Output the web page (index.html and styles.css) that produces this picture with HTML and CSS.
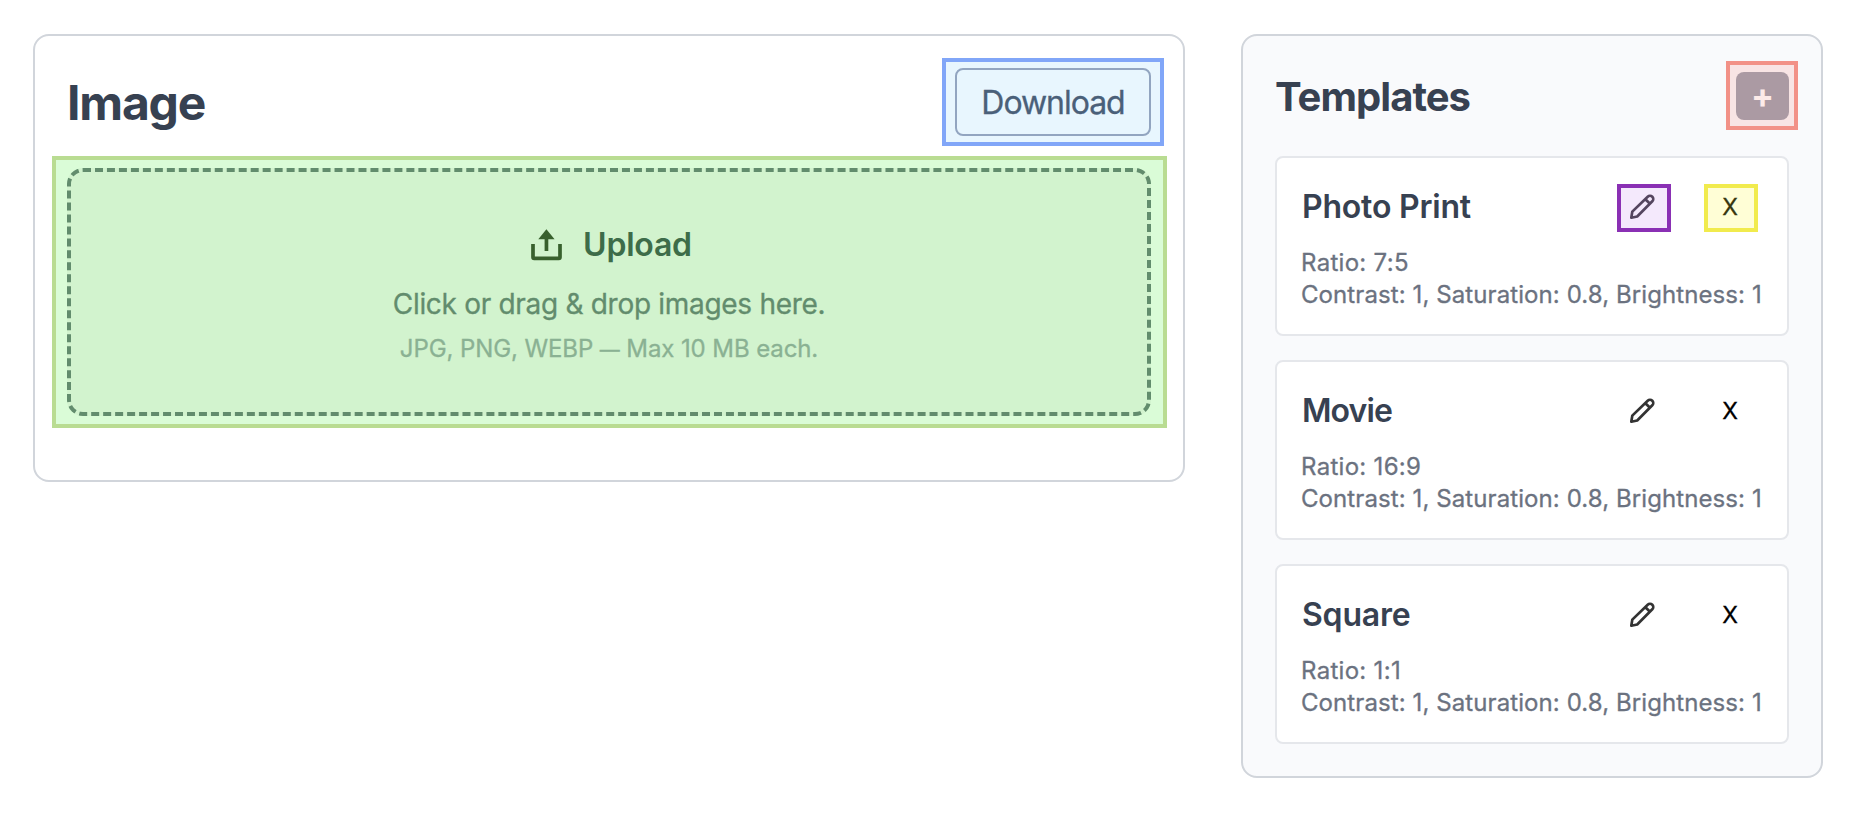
FILE: index.html
```html
<!DOCTYPE html>
<html lang="en">
<head>
<meta charset="utf-8">
<title>Image templates</title>
<link rel="stylesheet" href="styles.css">
</head>
<body>
<svg class="defs" aria-hidden="true">
  <symbol id="pencil" viewBox="0 0 25 25">
    <path d="M1.3 23.7 2.3 17.6 17.7 2.7a3.25 3.25 0 0 1 4.6 4.6L7.2 22.5ZM15.4 5.2 20 9.8"/>
  </symbol>
</svg>
<main class="page">
  <section class="panel image-panel">
    <header class="image-head">
      <h1 class="image-title">Image</h1>
      <button class="download mark mark-blue"><span>Download</span></button>
    </header>
    <div class="drop mark mark-green">
      <div class="drop-title">
        <svg class="upload-icon" viewBox="0 0 40 40">
          <path class="tray" d="M7 20v13.2q0 1.2 1.2 1.2h24.6q1.2 0 1.2-1.2V20"/>
          <path class="arrow" d="M20.4 5.2 28.6 15.2H22.3V27H18.6V15.2H12.3Z"/>
        </svg>
        <span>Upload</span>
      </div>
      <p class="drop-text">Click or drag &amp; drop images here.</p>
      <p class="drop-hint">JPG, PNG, WEBP <span class="dash">—</span> Max 10 MB each.</p>
    </div>
  </section>

  <aside class="panel templates-panel">
    <header class="templates-head">
      <h2 class="templates-title">Templates</h2>
      <button class="add mark mark-red"><span>+</span></button>
    </header>
    <article class="card">
      <div class="card-head">
        <h3 class="card-title">Photo Print</h3>
        <div class="actions">
          <button class="action edit mark mark-purple"><svg class="pencil"><use href="#pencil"/></svg></button>
          <button class="action remove mark mark-yellow"><span>X</span></button>
        </div>
      </div>
      <p class="card-line ratio">Ratio: 7:5</p>
      <p class="card-line">Contrast: 1, Saturation: 0.8, Brightness: 1</p>
    </article>
    <article class="card">
      <div class="card-head">
        <h3 class="card-title tight">Movie</h3>
        <div class="actions">
          <button class="action edit"><svg class="pencil"><use href="#pencil"/></svg></button>
          <button class="action remove"><span>X</span></button>
        </div>
      </div>
      <p class="card-line ratio">Ratio: 16:9</p>
      <p class="card-line">Contrast: 1, Saturation: 0.8, Brightness: 1</p>
    </article>
    <article class="card">
      <div class="card-head">
        <h3 class="card-title">Square</h3>
        <div class="actions">
          <button class="action edit"><svg class="pencil"><use href="#pencil"/></svg></button>
          <button class="action remove"><span>X</span></button>
        </div>
      </div>
      <p class="card-line ratio">Ratio: 1:1</p>
      <p class="card-line">Contrast: 1, Saturation: 0.8, Brightness: 1</p>
    </article>
  </aside>
</main>
</body>
</html>
```
FILE: styles.css
```css
* { box-sizing: border-box; }
body {
  margin: 0;
  background: #fff;
  color: #374151;
  font-family: Inter, "Liberation Sans", sans-serif;
}
h1, h2, h3, p { margin: 0; }
button {
  border: 0;
  padding: 0;
  background: none;
  font-family: inherit;
  color: inherit;
}
.defs { position: absolute; width: 0; height: 0; }

.page {
  display: flex;
  align-items: flex-start;
  gap: 56px;
  padding: 34px 27px 0 33px;
}
.panel {
  isolation: isolate;
  border: 2px solid #d1d5db;
  border-radius: 16px;
  padding: 32px;
}
.image-panel { width: 1152px; height: 448px; }
.templates-panel {
  width: 582px;
  height: 744px;
  padding: 36px 32px 32px;
  background: #f9fafc;
  display: flex;
  flex-direction: column;
  gap: 24px;
}

/* Highlight frames drawn around the interactive areas */
.mark { position: relative; }
.mark::before {
  content: "";
  position: absolute;
  z-index: -1;
  border: 4px solid;
}
.mark-blue::before { inset: -12px -15px; border-color: #81a6f8; background: #e8f6fe; }
.mark-green::before { inset: -16px -20px -16px -19px; border-color: #b9dc92; background: #dafcd7; }
.mark-red::before { inset: -11px -9px -10px -10px; border-color: #f29187; background: #f8e4e4; }
.mark-purple::before { inset: 2px 0 -2px; border-color: #8a30b4; background: #f4e9fc; }
.mark-yellow::before { inset: 2px 0 -2px; border-color: #f1eb4d; background: #fffed6; }

.image-head {
  display: flex;
  justify-content: space-between;
  align-items: center;
  height: 68px;
  margin-bottom: 32px;
}
.image-title { font-size: 48px; font-weight: 700; letter-spacing: -1.19px; }
.download {
  width: 196px;
  height: 68px;
  border: 2px solid #92a5c0;
  border-radius: 8px;
  font-size: 32px;
  letter-spacing: -1.04px;
  color: #4a6079;
  -webkit-text-stroke: 0.3px;
}

.drop {
  height: 248px;
  padding: 48px 0;
  border: 4px dashed #628c6d;
  border-radius: 16px;
  background: #d2f3ce;
  text-align: center;
}
.drop-title {
  display: flex;
  justify-content: center;
  align-items: center;
  gap: 17px;
  height: 48px;
  margin-bottom: 16px;
  font-size: 32px;
  font-weight: 600;
  letter-spacing: -0.21px;
  color: #3d6c49;
}
.upload-icon { width: 40px; height: 40px; }
.tray { fill: none; stroke: #38602d; stroke-width: 3.7; }
.arrow { fill: #38602d; }
.drop-text {
  margin-bottom: 9px;
  font-size: 28px;
  line-height: 40px;
  letter-spacing: -0.3px;
  color: #628c6d;
  -webkit-text-stroke: 0.3px;
}
.drop-hint {
  font-size: 24px;
  line-height: 32px;
  letter-spacing: -0.1px;
  color: #8ab193;
  -webkit-text-stroke: 0.3px;
}
.dash { font-size: 20px; line-height: 1; }

.templates-head {
  display: flex;
  justify-content: space-between;
  align-items: center;
  height: 48px;
  margin-bottom: 12px;
}
.templates-title { font-size: 40px; font-weight: 700; letter-spacing: -0.96px; }
.add {
  width: 53px;
  height: 48px;
  border-radius: 8px;
  background: #ab9aa3;
  color: #fdebe9;
  font-size: 34px;
  font-weight: 700;
  line-height: 48px;
}

.card {
  isolation: isolate;
  height: 180px;
  padding: 24px;
  border: 2px solid #e5e7eb;
  border-radius: 8px;
  background: #fff;
}
.card-head {
  display: flex;
  justify-content: space-between;
  align-items: center;
  height: 48px;
  margin-bottom: 17px;
}
.card-title { padding-left: 1px; font-size: 32px; font-weight: 600; letter-spacing: -0.2px; }
.card-title.tight { letter-spacing: -0.9px; }
.actions { display: flex; gap: 33px; padding-right: 5px; }
.action {
  display: flex;
  justify-content: center;
  align-items: center;
  width: 54px;
  height: 48px;
}
.edit { padding-right: 3px; }
.pencil {
  width: 25px;
  height: 25px;
  fill: none;
  stroke: #333;
  stroke-width: 2.7;
  stroke-linejoin: round;
}
.remove { font-size: 23px; color: #000; padding: 2px 2px 0 0; -webkit-text-stroke: 0.3px; }
.mark-purple .pencil { stroke: #54455f; }
.mark-yellow { color: #38370f; }
.card-line {
  font-size: 24px;
  line-height: 32px;
  letter-spacing: 0.09px;
  white-space: nowrap;
  color: #6b7280;
  -webkit-text-stroke: 0.3px;
}
.ratio { letter-spacing: 0.3px; }
```
